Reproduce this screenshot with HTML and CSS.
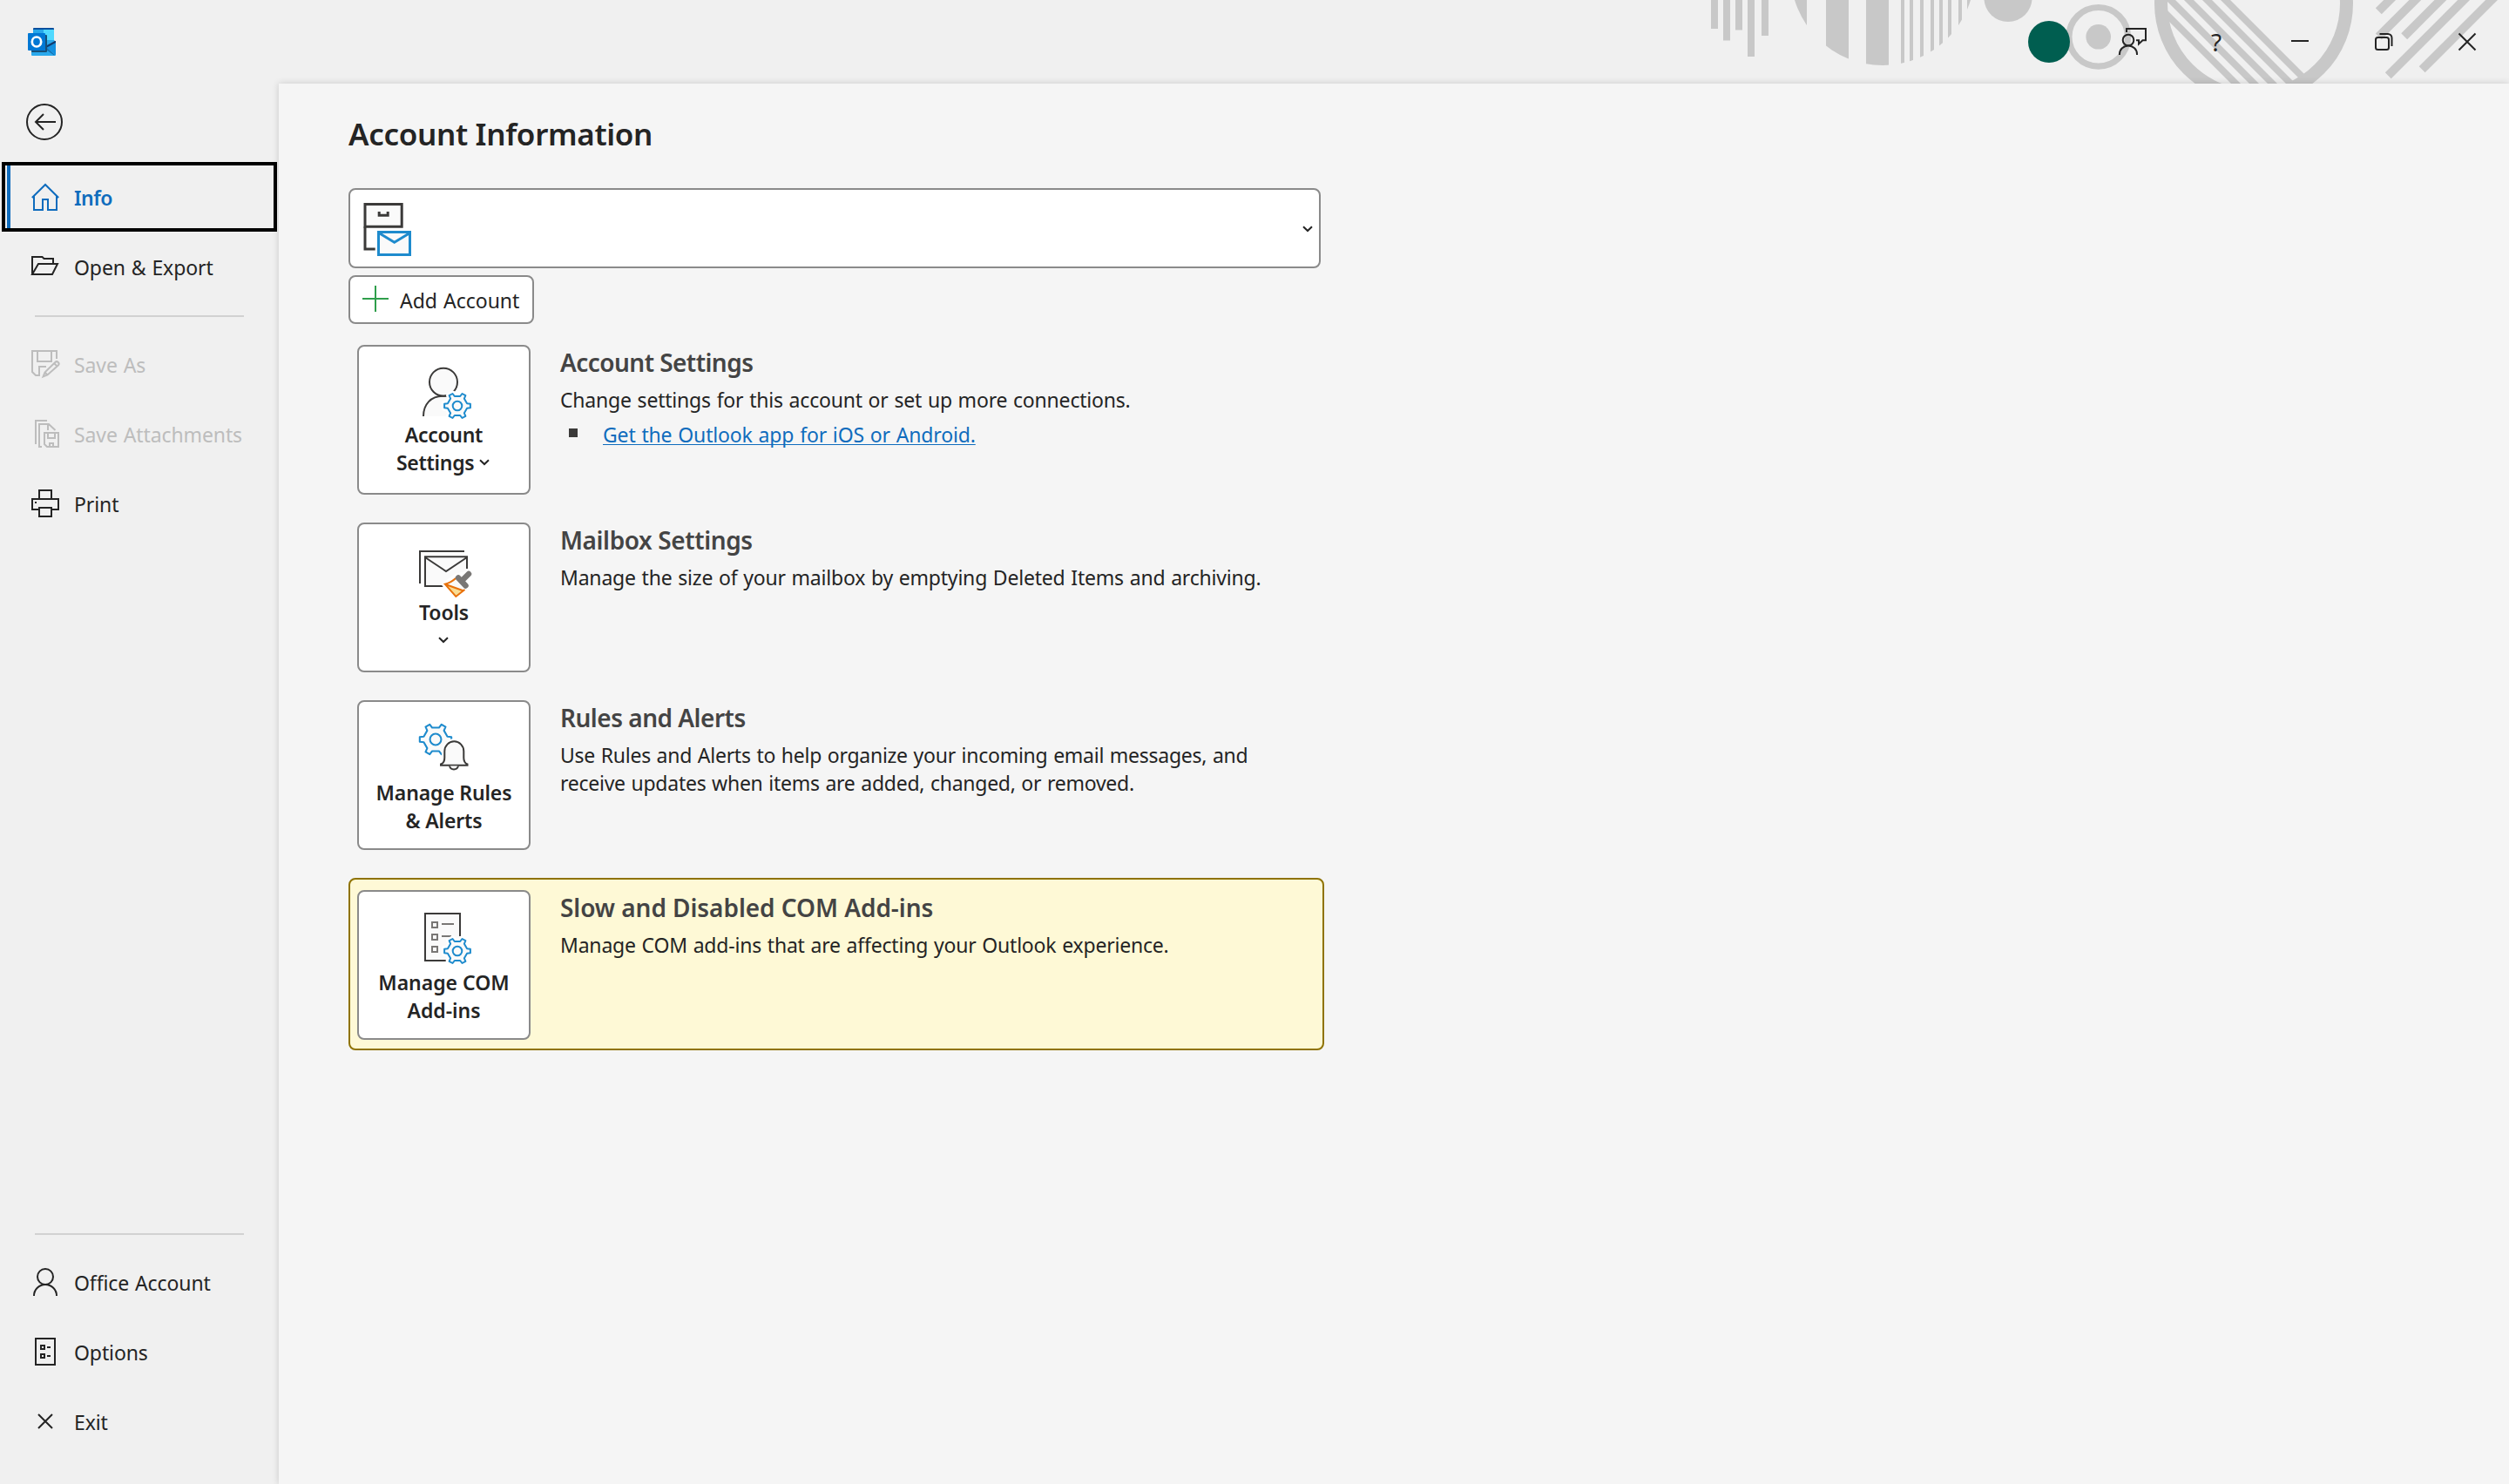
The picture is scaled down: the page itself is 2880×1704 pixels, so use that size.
FILE: index.html
```html
<!DOCTYPE html>
<html lang="en">
<head>
<meta charset="utf-8">
<title>Account Information</title>
<link rel="stylesheet" href="styles.css">
</head>
<body>
<svg class="defs" width="0" height="0" aria-hidden="true">
  <symbol id="gear" viewBox="-20 -20 40 40" overflow="visible">
    <path d="M-5.5-14L-3.2-11H3.2L5.5-14L9.4-11.8L7.9-8.3L11.1-2.7L14.9-2.2V2.2L11.1 2.7L7.9 8.3L9.4 11.8L5.5 14L3.2 11H-3.2L-5.5 14L-9.4 11.8L-7.9 8.3L-11.1 2.7L-14.9 2.2V-2.2L-11.1-2.7L-7.9-8.3L-9.4-11.8Z"/>
    <circle r="5.3"/>
  </symbol>
</svg>
<div class="app">
  <header class="titlebar">
    <svg class="decor" viewBox="1940 0 940 96" width="940" height="96">
      <defs>
        <clipPath id="disc"><circle cx="2161" cy="-30.5" r="105.5"/></clipPath>
        <clipPath id="hole"><circle cx="2587" cy="4" r="100"/></clipPath>
      </defs>
      <path d="M1964 0h8v33h-8zM1978 0h8v46.500h-8zM1992 0h8v34.500h-8zM2006 0h8v65h-8zM2022 0h8v41h-8z"/>
      <path clip-path="url(#disc)" d="M2050 0h24v96h-24zM2096 0h26v96h-26zM2142 0h26v96h-26zM2182 0h4v96h-4zM2192 0h4v96h-4zM2204 0h4v96h-4zM2216 0h4v96h-4zM2226 0h4v96h-4zM2236 0h4v96h-4zM2248 0h4v96h-4zM2258 0h6v96h-6z"/>
      <circle cx="2305" cy="-2.600" r="27.600"/>
      <circle cx="2408.700" cy="42.300" r="14.300"/>
      <g class="decor-line">
        <circle cx="2408.700" cy="42.300" r="33.800" stroke-width="7.200"/>
        <circle cx="2587" cy="4" r="106.500" stroke-width="15"/>
        <path clip-path="url(#hole)" stroke-width="7.800" d="M2544.500-10l120 120M2523.500-10l120 120M2502.500-10l120 120M2481.500-10l120 120M2460.500-10l120 120"/>
        <path stroke-width="9.800" d="M2730.300 12.800l30-30M2730.300 42l60-60M2759.700 41.700l60-60M2741.300 86.800l110-110M2780.200 79.800l100-100"/>
      </g>
    </svg>
    <svg class="logo" viewBox="0 0 32 32" width="32" height="32">
      <path fill="#28a8ea" d="M6 1h12v14H6z"/><path fill="#50d9ff" d="M18 1h12v13H18z"/>
      <path fill="#0a4f9e" d="M7 0h22a1 1 0 011 1v1H6V1a1 1 0 011-1z"/>
      <path fill="#2aa9ec" d="M4 14h26l2 2v15a1 1 0 01-1 1H5a1 1 0 01-1-1z"/>
      <path fill="#1490df" d="M32 15v16L21 22z"/>
      <path fill="#123b6d" d="M31 15h1v2l-11 6-1-2z"/><path fill="#1573b5" d="M21 22l10 9-1 .5-10-7z"/>
      <path fill="#174f77" d="M20 8h1a1 1 0 011 1v18a1 1 0 01-1 1H5a1 1 0 01-1-1v-1h16z"/>
      <rect y="6" width="20" height="20" rx="1" fill="#0078d4"/>
      <ellipse cx="10" cy="16" rx="5.200" ry="5.500" fill="none" stroke="#fff" stroke-width="2.700"/>
    </svg>
    <div class="controls">
      <div class="control"><span class="avatar"></span></div>
      <div class="control"><svg class="ico" viewBox="0 0 32 32"><circle cx="11" cy="14" r="6.300"/><path d="M1 31v-1a10 9.500 0 0120 0v1M9 5V0.900H31V14.200H27.500L23 18.500V14.200H20"/></svg></div>
      <div class="control help">?</div>
      <div class="control"><svg class="ico" viewBox="0 0 32 32"><path d="M6 15H26"/></svg></div>
      <div class="control"><svg class="ico" viewBox="0 0 32 32"><rect x="7" y="11" width="15" height="14" rx="2.500"/><path d="M11.500 7H21a4.500 4.500 0 014.500 4.500V21"/></svg></div>
      <div class="control"><svg class="ico" viewBox="0 0 32 32"><path d="M6.500 6.500l19 19M25.500 6.500l-19 19"/></svg></div>
    </div>
  </header>

  <nav class="sidebar">
    <svg class="back" viewBox="0 0 42 42" width="42" height="42"><circle cx="21" cy="21" r="20"/><path d="M34 21H11M20 12l-9 9 9 9"/></svg>
    <div class="item selected"><svg class="ico" viewBox="0 0 32 32"><path d="M.8 17L16 2 31.200 17M3 15.500V31H13V19H19V31H29V15.500"/></svg><span>Info</span></div>
    <div class="item"><svg class="ico" viewBox="0 0 32 32"><path d="M1 25V5H12.500L14.500 7H25V12M1 25L8 13H30L24 25Z"/></svg><span>Open &amp; Export</span></div>
    <hr>
    <div class="item disabled"><svg class="ico" viewBox="0 0 32 32"><path d="M29 10V1H1V25L5 29H9V19H17M7 1V13H23V1M13.500 30.500L15.500 25.500 27.300 14a2.400 2.400 0 013.500 3.500L18.500 28.500ZM15.500 25.500L18.500 28.500M26 15l3 3"/></svg><span>Save As</span></div>
    <div class="item disabled"><svg class="ico" viewBox="0 0 32 32"><path d="M5 28V1H18M12 31H9V5H20L27.500 12M19 5V12M15 15H31V31H18L15 28ZM19 15V21H27V15M21 31V27H25V31"/></svg><span>Save Attachments</span></div>
    <div class="item"><svg class="ico" viewBox="0 0 32 32"><path d="M9 11V1H23V11M9 23H1V11H31V23H23M9 21H23V31H9ZM4 15H6"/></svg><span>Print</span></div>
    <div class="spacer"></div>
    <hr>
    <div class="item"><svg class="ico" viewBox="0 0 32 32"><circle cx="16" cy="10" r="9"/><path d="M3 32a13 13 0 0126 0"/></svg><span>Office Account</span></div>
    <div class="item"><svg class="ico" viewBox="0 0 32 32"><path d="M5 1H27V31H5ZM11 9H15V13H11ZM11 19H15V23H11ZM18 11H22M18 21H22"/></svg><span>Options</span></div>
    <div class="item"><svg class="ico" viewBox="0 0 32 32"><path d="M8 8L24 24M24 8L8 24"/></svg><span>Exit</span></div>
  </nav>

  <main class="page">
    <h1>Account Information</h1>
    <div class="account-select">
      <svg viewBox="0 0 80 88" width="80" height="88" fill="#fafafa" stroke-width="3">
        <path fill="none" stroke="#3b3a39" d="M28.700 68H17V42.300"/><path stroke="#3b3a39" d="M17 16.600H59.200V42.300H17Z"/>
        <path fill="none" stroke="#3b3a39" d="M33.200 25V29.300H43.200V25"/>
        <path stroke="#1e8bcd" d="M32.500 48.500H68.500V74.500H32.500Z"/><path fill="none" stroke="#1e8bcd" d="M33 49.500L50.700 60.300 68.500 49.500"/>
      </svg>
      <svg class="chev" viewBox="0 0 12 8" width="12" height="8"><path d="M1 1.200L6 6 11 1.200"/></svg>
    </div>
    <button class="add"><svg viewBox="0 0 30 30" width="30" height="30"><path d="M15 0V30M0 15H30"/></svg><span>Add Account</span></button>

    <section class="row">
      <button class="tile t1">
        <svg class="art" viewBox="0 0 195 85" width="195" height="85">
          <path fill="#fafafa" d="M74 80a22 23 0 0122-23.300h6L110 80z"/>
          <circle cx="97" cy="40.700" r="16" class="dark fill"/><path class="dark" d="M74 80C74 66 83 56.700 96 56.700H101"/>
          <use href="#gear" x="93" y="48" width="40" height="40" class="halo"/><use href="#gear" x="93" y="48" width="40" height="40" class="gear"/>
        </svg>
        <span>Account</span><span class="drop">Settings <svg class="chev inline" viewBox="0 0 12 8" width="12" height="8"><path d="M1 1.200L6 6 11 1.200"/></svg></span>
      </button>
      <div class="info"><h2 class="h-a">Account Settings</h2><p class="p-a">Change settings for this account or set up more connections.</p>
        <ul><li><a href="#">Get the Outlook app for iOS or Android.</a></li></ul></div>
    </section>

    <section class="row">
      <button class="tile t2">
        <svg class="art" viewBox="0 0 195 85" width="195" height="85">
          <path class="dark" d="M70 68V31H121"/><path fill="#fafafa" d="M76 37h48v16L98 71H76z"/>
          <path class="dark" d="M124 51V37.300H76V71H96.500M76 38L100 54 124 38"/>
          <path fill="#fff" d="M94 69L110 57 122 54H132V62L122 80 111 85z"/>
          <path fill="#fafafa" d="M98.700 68.700Q106 67 111 62L121.500 74.500 111.300 83Z"/>
          <path fill="#f9dc93" d="M98.700 68.700L119.700 76.300 111.300 83Z"/>
          <path fill="none" stroke="#e8710a" stroke-width="2" d="M111 62Q106 67 98.700 68.700L111.300 83 121.500 75M98.700 68.700L119.700 76.300"/>
          <path fill="none" stroke="#797775" stroke-width="6.500" stroke-linecap="round" d="M126 57L118 65"/><path fill="none" stroke="#797775" stroke-width="6.500" stroke-linecap="round" d="M114 61.500L122.500 70.500"/>
        </svg>
        <span>Tools</span><span class="drop"><svg class="chev inline" viewBox="0 0 12 8" width="12" height="8"><path d="M1 1.200L6 6 11 1.200"/></svg></span>
      </button>
      <div class="info"><h2 class="h-b">Mailbox Settings</h2><p>Manage the size of your mailbox by emptying Deleted Items and archiving.</p></div>
    </section>

    <section class="row">
      <button class="tile t3">
        <svg class="art" viewBox="0 0 195 88" width="195" height="88">
          <use href="#gear" x="63.600" y="18.600" width="48.800" height="48.800" class="gear big"/>
          <path fill="#fff" stroke="#fff" stroke-width="7" d="M98.500 66V57a10.700 11.300 0 0121.400 0V66L124 72H95Z"/>
          <path class="dark fill" d="M94 72.700V71.500Q98.300 70 98.300 64V56.500a11 11.200 0 0122 0V64Q120.300 70 124.500 71.500V72.700Z"/>
          <path class="dark fill" d="M104 73.500a5.200 5.400 0 0010 0"/>
        </svg>
        <span>Manage Rules</span><span>&amp; Alerts</span>
      </button>
      <div class="info"><h2 class="h-c">Rules and Alerts</h2><p class="p-c">Use Rules and Alerts to help organize your incoming email messages, and<br>receive updates when items are added, changed, or removed.</p></div>
    </section>

    <section class="row warn">
      <button class="tile t4">
        <svg class="art" viewBox="0 0 195 88" width="195" height="88">
          <path class="dark fill" d="M116 51V25H76V79H99.700"/>
          <path fill="none" stroke="#797775" stroke-width="2" d="M84 35h6v6h-6zM84 49h6v6h-6zM84 63h6v6h-6zM95 37H109M95 51H106"/>
          <use href="#gear" x="93" y="48" width="40" height="40" class="halo"/><use href="#gear" x="93" y="48" width="40" height="40" class="gear"/>
        </svg>
        <span>Manage COM</span><span>Add-ins</span>
      </button>
      <div class="info"><h2 class="h-d">Slow and Disabled COM Add-ins</h2><p>Manage COM add-ins that are affecting your Outlook experience.</p></div>
    </section>
  </main>
</div>
</body>
</html>
```
FILE: styles.css
```css
* { box-sizing: border-box; }
body { margin: 0; font: 23px/32px "Noto Sans", "Open Sans", sans-serif; color: #242424; background: #f0f0f0; }
.defs { position: absolute; }
.app { display: grid; grid-template: 96px 1608px / 320px 1fr; width: 2880px; height: 1704px; overflow: hidden; }

.titlebar { grid-column: 1 / 3; display: flex; align-items: center; justify-content: space-between; padding-left: 32px; position: relative; }
.decor { position: absolute; right: 0; top: 0; fill: #c8c8c8; }
.decor-line { fill: none; stroke: #c8c8c8; }
.logo { position: relative; }
.controls { position: relative; display: flex; }
.control { width: 96px; height: 96px; display: flex; align-items: center; justify-content: center; }
.avatar { width: 48px; height: 48px; border-radius: 50%; background: #005e50; }
.help { font-size: 28px; font-weight: 400; }
.ico { width: 32px; height: 32px; flex: none; fill: none; stroke: currentColor; stroke-width: 2; overflow: visible; }

.sidebar { display: flex; flex-direction: column; padding: 23px 2px 32px; }
.back { margin: 0 0 25px 28px; fill: none; stroke: #242424; stroke-width: 2; }
.item { height: 80px; display: flex; align-items: center; gap: 17px; padding-left: 34px; flex: none; letter-spacing: -.1px; word-spacing: 1px; }
.item span { padding-top: 2px; white-space: nowrap; }
.selected { border: 4px solid #000; padding-left: 30px; color: #0f6cbd; font-weight: 600; letter-spacing: -.5px; background: linear-gradient(#0f6cbd, #0f6cbd) 2px 0 / 4px 100% no-repeat; }
.disabled { color: #bdbdbd; }
.spacer { flex: 1; }
hr { width: 240px; height: 2px; border: 0; background: #d1d1d1; margin: 16px 0 14px 38px; flex: none; }

.page { position: relative; background: #f5f5f5; box-shadow: 0 0 8px rgba(0, 0, 0, .16); padding: 34px 80px 0; display: flex; flex-direction: column; align-items: flex-start; }
h1 { margin: 0 0 38px; font-size: 35px; line-height: 48px; font-weight: 600; letter-spacing: -.33px; }
.account-select { width: 1116px; height: 92px; border: 2px solid #8a8a8a; border-radius: 8px; background: #fff; display: flex; align-items: center; justify-content: space-between; padding: 1px 7px 0 0; }
.account-select svg:first-child { margin-top: -1px; }
.chev { fill: none; stroke: #242424; stroke-width: 2; }
button { font: inherit; color: inherit; background: #fff; border: 2px solid #8a8a8a; border-radius: 8px; padding: 0; }
.add { width: 213px; height: 56px; margin: 8px 0 24px; display: flex; align-items: center; gap: 13px; padding-left: 14px; }
.add svg { fill: none; stroke: #2f9e4b; stroke-width: 2; position: relative; top: -1px; }
.add span { padding-top: 2px; word-spacing: 1px; }

.row { display: flex; gap: 34px; padding-left: 10px; height: 172px; margin-bottom: 32px; }
.tile { width: 199px; height: 172px; display: flex; flex-direction: column; align-items: center; font-weight: 600; line-height: 32px; flex: none; }
.tile span { display: block; height: 32px; white-space: nowrap; }
.tile .drop { margin-right: 2px; }
.t1 { letter-spacing: -.3px; }
.t2, .t3 { letter-spacing: -.15px; }
.art { display: block; flex: none; }
.inline { position: relative; top: -5px; }
.dark { fill: none; stroke: #3b3a39; stroke-width: 2; }
.dark.fill { fill: #fafafa; }
.gear { fill: #fafafa; stroke: #1e8bcd; stroke-width: 2; stroke-linejoin: round; }
.gear.big { stroke-width: 1.7; }
.halo { fill: #fff; stroke: #fff; stroke-width: 7; stroke-linejoin: round; }
.info { display: flex; flex-direction: column; }
h2 { margin: 0 0 7px; font-size: 28px; line-height: 40px; font-weight: 600; color: #444; white-space: nowrap; }
p { margin: 0; white-space: nowrap; letter-spacing: -.2px; word-spacing: 1px; }
.h-a { letter-spacing: -.55px; }
.h-b { letter-spacing: -.4px; }
.h-c { letter-spacing: -.5px; }
.h-d { letter-spacing: -.06px; }
.p-c { letter-spacing: -.26px; }
ul { list-style: none; margin: 8px 0 0; padding: 0 0 0 10px; }
li { display: flex; align-items: center; gap: 29px; }
li::before { content: ""; width: 10px; height: 10px; background: #3b3a39; margin-top: -4px; }
a { color: #0f6cbd; text-decoration: underline 1px; text-underline-offset: 2px; text-decoration-skip-ink: none; letter-spacing: -.15px; word-spacing: 1px; }
.warn { width: 1120px; height: 198px; padding: 12px 0 0 8px; border: 2px solid #8f7300; border-radius: 8px; background: #fef9d6; }
```
